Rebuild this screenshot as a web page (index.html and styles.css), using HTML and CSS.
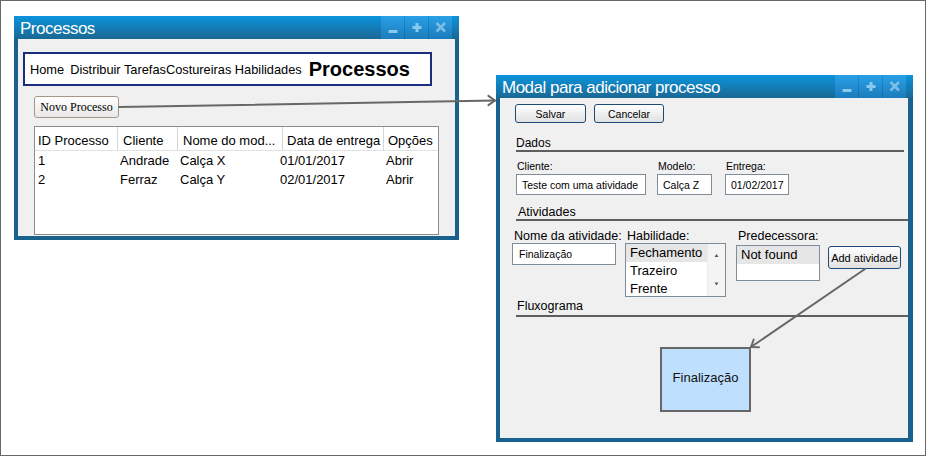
FILE: index.html
```html
<!DOCTYPE html>
<html lang="pt">
<head>
<meta charset="utf-8">
<title>Processos</title>
<link rel="stylesheet" href="styles.css">
</head>
<body>
<div class="desktop">

  <div class="window win-main">
    <div class="titlebar">
      <span class="title">Processos</span>
      <div class="win-controls">
        <span class="ctl"><svg width="23" height="23" viewBox="0 0 23 23"><rect x="7.5" y="14" width="9" height="3" fill="#8bc8ee"/></svg></span>
        <span class="ctl"><svg width="23" height="23" viewBox="0 0 23 23"><rect x="7.5" y="10" width="9" height="3" fill="#8bc8ee"/><rect x="10.5" y="7" width="3" height="9" fill="#8bc8ee"/></svg></span>
        <span class="ctl"><svg width="23" height="23" viewBox="0 0 23 23"><path d="M7.5 7 L16 15.5 M16 7 L7.5 15.5" stroke="#7dbde6" stroke-width="2.6"/></svg></span>
      </div>
    </div>
    <div class="win-body main-body">
      <nav class="nav">
        <span class="nav-item nav-home">Home</span>
        <span class="nav-item">Distribuir Tarefas</span>
        <span class="nav-item nav-cost">Costureiras</span>
        <span class="nav-item nav-hab">Habilidades</span>
        <span class="nav-item nav-active">Processos</span>
      </nav>
      <button class="btn-novo">Novo Processo</button>
      <div class="table">
        <div class="thead">
          <div class="th">ID Processo</div>
          <div class="th">Cliente</div>
          <div class="th">Nome do mod...</div>
          <div class="th">Data de entrega</div>
          <div class="th">Opções</div>
        </div>
        <div class="trow">
          <div class="td">1</div>
          <div class="td">Andrade</div>
          <div class="td">Calça X</div>
          <div class="td">01/01/2017</div>
          <div class="td">Abrir</div>
        </div>
        <div class="trow">
          <div class="td">2</div>
          <div class="td">Ferraz</div>
          <div class="td">Calça Y</div>
          <div class="td">02/01/2017</div>
          <div class="td">Abrir</div>
        </div>
      </div>
    </div>
  </div>

  <div class="window win-modal">
    <div class="titlebar">
      <span class="title">Modal para adicionar processo</span>
      <div class="win-controls">
        <span class="ctl"><svg width="23" height="23" viewBox="0 0 23 23"><rect x="7.5" y="14" width="9" height="3" fill="#8bc8ee"/></svg></span>
        <span class="ctl"><svg width="23" height="23" viewBox="0 0 23 23"><rect x="7.5" y="10" width="9" height="3" fill="#8bc8ee"/><rect x="10.5" y="7" width="3" height="9" fill="#8bc8ee"/></svg></span>
        <span class="ctl"><svg width="23" height="23" viewBox="0 0 23 23"><path d="M7.5 7 L16 15.5 M16 7 L7.5 15.5" stroke="#7dbde6" stroke-width="2.6"/></svg></span>
      </div>
    </div>
    <div class="win-body modal-body">
      <div class="btn-row">
        <button class="btn btn-salvar">Salvar</button>
        <button class="btn btn-cancelar">Cancelar</button>
      </div>

      <div class="section sec-dados">Dados</div>
      <div class="fields">
        <div class="fgroup g-cliente">
          <span class="flabel">Cliente:</span>
          <div class="finput">Teste com uma atividade</div>
        </div>
        <div class="fgroup g-modelo">
          <span class="flabel">Modelo:</span>
          <div class="finput">Calça Z</div>
        </div>
        <div class="fgroup g-entrega">
          <span class="flabel">Entrega:</span>
          <div class="finput">01/02/2017</div>
        </div>
      </div>

      <div class="section sec-ativ">Atividades</div>
      <div class="act-row">
        <div class="agroup g-nome">
          <span class="alabel">Nome da atividade:</span>
          <div class="ainput">Finalização</div>
        </div>
        <div class="agroup g-hab">
          <span class="alabel">Habilidade:</span>
          <div class="listbox lb-hab">
            <div class="lb-items">
              <div class="lb-item sel">Fechamento</div>
              <div class="lb-item">Trazeiro</div>
              <div class="lb-item">Frente</div>
            </div>
            <div class="scrollbar">
              <svg width="17" height="52" viewBox="0 0 17 52"><polygon points="6.5,13 10.5,13 8.5,10" fill="#5a5a5a"/><polygon points="6.5,38.5 10.5,38.5 8.5,41.5" fill="#5a5a5a"/></svg>
            </div>
          </div>
        </div>
        <div class="agroup g-pred">
          <span class="alabel">Predecessora:</span>
          <div class="listbox lb-pred">
            <div class="lb-item sel">Not found</div>
          </div>
        </div>
        <button class="btn btn-add">Add atividade</button>
      </div>

      <div class="section sec-flux">Fluxograma</div>
      <div class="canvas">
        <div class="node">Finalização</div>
      </div>
    </div>
  </div>

  <svg class="connectors" width="928" height="456" viewBox="0 0 928 456">
    <g stroke="#676767" stroke-width="2" fill="none" stroke-linecap="round" stroke-linejoin="round">
      <line x1="119" y1="107" x2="495" y2="100.5"/>
      <polyline points="488.4,95.9 495,100.5 488.4,105.1"/>
      <line x1="865" y1="269" x2="751" y2="347"/>
      <polyline points="759,347.2 751,347 753.7,339.5"/>
    </g>
  </svg>
</div>
</body>
</html>
```

FILE: styles.css
```css
html, body {
  margin: 0;
  padding: 0;
  background: #ffffff;
}

body {
  font-family: "Liberation Sans", Arial, sans-serif;
  color: #000;
}

.desktop {
  position: relative;
  width: 926px;
  height: 456px;
  background: #ffffff;
  box-shadow: inset 0 0 0 1px #686868;
  overflow: hidden;
}

/* ---------- windows ---------- */
.window {
  position: absolute;
  display: flex;
  flex-direction: column;
  background: #19628d;
  box-sizing: border-box;
}

.win-main {
  left: 14px;
  top: 16px;
  width: 445px;
  height: 224px;
}

.win-modal {
  left: 496px;
  top: 75px;
  width: 417px;
  height: 367px;
}

.titlebar {
  height: 23px;
  flex: 0 0 23px;
  display: flex;
  background: linear-gradient(#0b93dc, #1b6893);
}

.title {
  padding: 2px 0 0 6px;
  line-height: 22px;
  font-size: 17px;
  letter-spacing: -0.5px;
  color: #ffffff;
  white-space: nowrap;
}

.win-controls {
  margin-left: auto;
  display: flex;
  gap: 1px;
  padding-right: 7px;
}

.ctl {
  width: 23px;
  height: 23px;
  display: block;
  background: linear-gradient(#2aa0e6, #1a7cbc);
}

.ctl svg {
  display: block;
}

.win-body {
  flex: 1;
  background: #f0f0f0;
  display: flex;
  flex-direction: column;
}

.main-body {
  margin: 0 4px 4px 4px;
}

.modal-body {
  margin: 0 5px 4px 4px;
}

/* ---------- main window ---------- */
.nav {
  margin: 13px 0 0 5px;
  width: 409px;
  height: 34px;
  box-sizing: border-box;
  border: 2px solid #1c2d7e;
  background: #ffffff;
  display: flex;
  align-items: center;
  padding: 1px 0 0 5px;
  font-size: 12.8px;
  white-space: nowrap;
}

.nav-home { margin-right: 6px; }
.nav-cost { margin-right: 3.5px; }
.nav-hab { margin-right: 7px; }

.nav-active {
  font-size: 20px;
  font-weight: bold;
}

.btn-novo {
  align-self: flex-start;
  margin: 10px 0 0 16px;
  width: 85px;
  height: 22px;
  padding: 0;
  border: 1px solid #a5988a;
  border-radius: 3px;
  background: linear-gradient(#ffffff, #e8e8e8);
  font-family: "Liberation Serif", "Times New Roman", serif;
  font-size: 12px;
  color: #000;
}

.table {
  margin: 8px 16px 0 16px;
  height: 109px;
  box-sizing: border-box;
  border: 1px solid #8c8d8e;
  background: #ffffff;
  font-size: 13px;
}

.thead {
  display: grid;
  grid-template-columns: 83px 60px 105px 101px 1fr;
  height: 24px;
  box-sizing: border-box;
  border-bottom: 1px solid #e2e2e2;
}

.th {
  padding: 6px 0 0 5px;
  line-height: 15px;
  border-right: 1px solid #d5d5d5;
  white-space: nowrap;
  overflow: hidden;
}

.th:first-child { padding-left: 3px; }
.th:nth-child(4), .th:nth-child(5) { padding-left: 4px; }
.th:last-child { border-right: none; }

.trow {
  display: grid;
  grid-template-columns: 83px 60px 100px 106px 1fr;
  line-height: 19px;
}

.td {
  padding-left: 2px;
  white-space: nowrap;
}

.td:first-child { padding-left: 3px; }

/* ---------- modal window ---------- */
.btn-row {
  display: flex;
  gap: 8px;
  margin: 6px 0 0 15px;
}

.btn {
  height: 19px;
  padding: 0;
  border: 1px solid #1e4a77;
  border-radius: 3px;
  background: linear-gradient(#fefefe, #e1e1e1);
  font-family: "Liberation Sans", Arial, sans-serif;
  font-size: 10.5px;
  color: #000;
}

.btn-salvar { width: 71px; }
.btn-cancelar { width: 70px; }

.section {
  box-sizing: border-box;
  border-bottom: 2px solid #5e5e5e;
  line-height: 13px;
  white-space: nowrap;
}

.sec-dados {
  margin: 14px 0 0 16px;
  width: 388px;
  font-size: 12px;
}

.sec-ativ {
  margin: 11px 0 0 16px;
  width: 392px;
  padding-left: 2px;
  font-size: 12.5px;
}

.sec-flux {
  margin: 3px 0 0 16px;
  width: 392px;
  padding: 0 0 2px 1px;
  font-size: 12.5px;
}

.fields {
  display: flex;
  margin: 8px 0 0 16px;
}

.fgroup {
  display: flex;
  flex-direction: column;
}

.g-cliente { width: 130px; }
.g-modelo { width: 55px; margin-left: 11px; }
.g-entrega { width: 64px; margin-left: 13px; }

.flabel {
  font-size: 10.5px;
  line-height: 12px;
  padding-left: 1px;
  white-space: nowrap;
}

.finput,
.ainput {
  margin-top: 2px;
  height: 21px;
  box-sizing: border-box;
  border: 1px solid #7f8c99;
  background: #ffffff;
  display: flex;
  align-items: center;
  padding-left: 5px;
  font-size: 10.5px;
  white-space: nowrap;
  overflow: hidden;
}

.act-row {
  display: flex;
  align-items: flex-start;
  margin: 9px 0 0 12px;
}

.agroup {
  display: flex;
  flex-direction: column;
}

.alabel {
  font-size: 12.5px;
  line-height: 13px;
  padding-left: 2px;
  white-space: nowrap;
}

.g-nome { width: 104px; }
.g-hab { width: 101px; margin-left: 9px; }
.g-pred { width: 84px; margin-left: 10px; }

.ainput {
  margin-top: 0;
  height: 22px;
  padding-left: 6px;
}

.listbox {
  box-sizing: border-box;
  border: 1px solid #7f8c99;
  background: #ffffff;
  overflow: hidden;
  font-size: 13px;
}

.lb-hab {
  height: 54px;
  display: flex;
}

.lb-pred {
  margin-top: 2px;
  height: 36px;
}

.lb-items {
  flex: 1;
}

.lb-item {
  line-height: 18px;
  padding-left: 4px;
  white-space: nowrap;
}

.lb-item.sel {
  background: #e6e6e6;
}

.scrollbar {
  width: 17px;
  background: #f4f4f4;
  border-left: 1px solid #ebebeb;
}

.scrollbar svg {
  display: block;
}

.btn-add {
  margin: 16px 0 0 8px;
  width: 73px;
  height: 23px;
  font-size: 11px;
}

.canvas {
  flex: 1;
  display: flex;
  align-items: flex-start;
}

.node {
  margin: 30px 0 0 160px;
  width: 91px;
  height: 65px;
  box-sizing: border-box;
  border: 2px solid #666666;
  background: #bfdffe;
  display: flex;
  align-items: center;
  justify-content: center;
  padding-bottom: 4px;
  font-size: 13px;
  color: #111;
}

/* ---------- connectors overlay ---------- */
.connectors {
  position: absolute;
  left: 0;
  top: 0;
  pointer-events: none;
}
```
